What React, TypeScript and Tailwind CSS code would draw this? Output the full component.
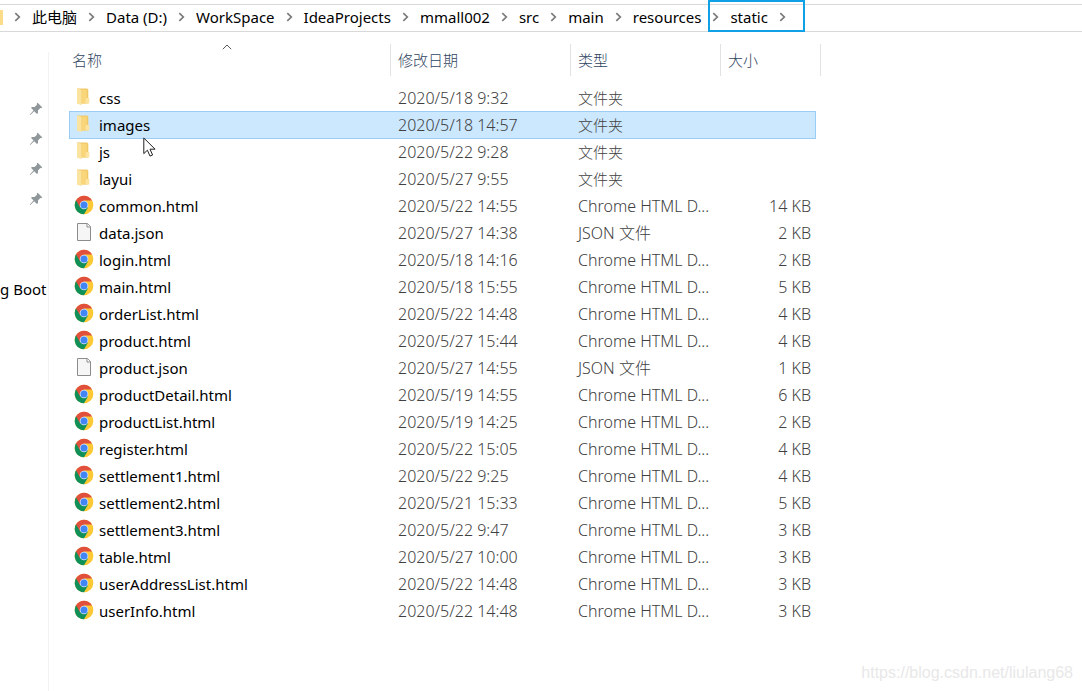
import { useState } from "react";

type FileKind = "folder" | "html" | "json";

type FileItem = {
    name : string,
    date : string,
    kind : FileKind,
    size? : string,
}

const path = ["此电脑", "Data (D:)", "WorkSpace", "IdeaProjects", "mmall002", "src", "main", "resources"];

const files : FileItem[] = [
    { name: "css", date: "2020/5/18 9:32", kind: "folder" },
    { name: "images", date: "2020/5/18 14:57", kind: "folder" },
    { name: "js", date: "2020/5/22 9:28", kind: "folder" },
    { name: "layui", date: "2020/5/27 9:55", kind: "folder" },
    { name: "common.html", date: "2020/5/22 14:55", kind: "html", size: "14 KB" },
    { name: "data.json", date: "2020/5/27 14:38", kind: "json", size: "2 KB" },
    { name: "login.html", date: "2020/5/18 14:16", kind: "html", size: "2 KB" },
    { name: "main.html", date: "2020/5/18 15:55", kind: "html", size: "5 KB" },
    { name: "orderList.html", date: "2020/5/22 14:48", kind: "html", size: "4 KB" },
    { name: "product.html", date: "2020/5/27 15:44", kind: "html", size: "4 KB" },
    { name: "product.json", date: "2020/5/27 14:55", kind: "json", size: "1 KB" },
    { name: "productDetail.html", date: "2020/5/19 14:55", kind: "html", size: "6 KB" },
    { name: "productList.html", date: "2020/5/19 14:25", kind: "html", size: "2 KB" },
    { name: "register.html", date: "2020/5/22 15:05", kind: "html", size: "4 KB" },
    { name: "settlement1.html", date: "2020/5/22 9:25", kind: "html", size: "4 KB" },
    { name: "settlement2.html", date: "2020/5/21 15:33", kind: "html", size: "5 KB" },
    { name: "settlement3.html", date: "2020/5/22 9:47", kind: "html", size: "3 KB" },
    { name: "table.html", date: "2020/5/27 10:00", kind: "html", size: "3 KB" },
    { name: "userAddressList.html", date: "2020/5/22 14:48", kind: "html", size: "3 KB" },
    { name: "userInfo.html", date: "2020/5/22 14:48", kind: "html", size: "3 KB" },
];

const kindLabels : Record<FileKind, string> = {
    folder: "文件夹",
    html: "Chrome HTML D...",
    json: "JSON 文件",
};

function Chevron() {
    return (
        <svg viewBox="0 0 29 10" className="h-[10px] w-[29px] shrink-0" fill="none" stroke="#7a7a7a" strokeWidth="1.7">
            <path d="M12.3 1.2 16.3 5l-4 3.8" />
        </svg>
    )
}

function FolderIcon() {
    return (
        <svg viewBox="0 0 20 20" className="mb-0.5 size-5">
            <path d="M3 1.5h10l1.3 1v14H3z" fill="#f0c868" />
            <path d="M3 1.5l4.5 1.3v15.4L3 16.6z" fill="#fbe3a0" />
            <path d="M7.5 2.8h5.2v8.4l-1 1v4.3H7.5z" fill="#fad67a" />
            <path d="M12.4 11h2.9v5.5h-3.8v-4.6z" fill="#fde3a0" />
        </svg>
    )
}

function PageIcon() {
    return (
        <svg viewBox="0 0 20 20" className="mb-0.5 size-5">
            <path d="M3.5 1.5h10l3 3v14h-13z" fill="#f6f6f6" stroke="#8c8c8c" />
            <path d="M13 1.5v3.5h3.5" fill="#fff" stroke="#8c8c8c" />
        </svg>
    )
}

function ChromeIcon() {
    return (
        <svg viewBox="0 0 20 20" className="mb-0.5 size-5">
            <circle cx="10" cy="10" r="9.3" fill="#fcc934" />
            <path d="M10 10 1.95 5.35a9.3 9.3 0 0 0 8.05 13.95l4-6.9z" fill="#0f9058" />
            <path d="M1.95 5.35a9.3 9.3 0 0 1 16.1 0.15H10L6 12.3z" fill="#e0503c" />
            <circle cx="10" cy="10" r="4.3" fill="#dfe9f8" />
            <circle cx="10" cy="10" r="3.5" fill="#4285f4" />
        </svg>
    )
}

function PinIcon() {
    return (
        <svg viewBox="0 0 14 14" className="size-[14px]" fill="#8f979b">
            <path d="M8.6 0.8 13.2 5.2 12.2 6.2 11.3 6 9 8.4 9 11 8 12 5.2 9.2 1.2 12.9 0.8 12.5 4.5 8.5 2 5.8 3 4.9 5.6 5 8 2.8 7.7 1.7z" />
        </svg>
    )
}

function FileIcon({ kind } : { kind : FileKind }) {
    if (kind === "folder") return <FolderIcon />
    if (kind === "html") return <ChromeIcon />
    return <PageIcon />
}

function AddressBar() {
    return (
        <nav className="mt-1 flex h-7 items-center border-y border-[#d9d9d9] pb-0.5" aria-label="path">
            <span className="h-[15px] w-[3px] bg-[#fbdc8a]" />
            <ol className="flex items-center whitespace-nowrap">
                {path.map((name) => (
                    <li key={name} className="flex items-center">
                        <Chevron />
                        <a href="#" className="text-black">{name}</a>
                    </li>
                ))}
                <li className="relative flex items-center">
                    <Chevron />
                    <a href="#" className="text-black">static</a>
                    <Chevron />
                    <span className="pointer-events-none absolute -top-[7px] -right-2 -bottom-[5px] left-[7px] border-2 border-[#0fa0e6]" />
                </li>
            </ol>
        </nav>
    )
}

function Sidebar() {
    return (
        <aside className="mt-5 w-[49px] shrink-0 overflow-hidden border-r border-[#f3f3f3] pt-[50px]">
            <ul className="flex flex-col gap-4 pl-[29px]">
                {[1, 2, 3, 4].map((n) => (
                    <li key={n}><PinIcon /></li>
                ))}
            </ul>
            <p className="mt-[73px] whitespace-nowrap text-black">g Boot</p>
        </aside>
    )
}

function App() {
    const [selected, setSelected] = useState("images")

    return (
        <div className="relative flex min-h-screen flex-col overflow-hidden bg-white font-['Noto_Sans','Noto_Sans_CJK_SC',sans-serif] text-[15px] leading-5">
            <AddressBar />

            <div className="flex grow">
                <Sidebar />

                <main className="ml-5 pt-3">
                    <table className="w-[752px] table-fixed border-separate border-spacing-0 text-left font-light">
                        <colgroup>
                            <col className="w-[322px]" />
                            <col className="w-[180px]" />
                            <col className="w-[150px]" />
                            <col className="w-[95px]" />
                            <col className="w-[5px]" />
                        </colgroup>
                        <thead className="text-[#2f4460]">
                            <tr className="h-8">
                                <th className="relative border-r border-[#e2e2e2] p-0 pl-[3px] font-light">
                                    <button type="button">名称</button>
                                    <svg viewBox="0 0 10 6" className="absolute top-0 left-[153px] h-[6px] w-[10px]" fill="none" stroke="#5a5a5a">
                                        <path d="M0.8 5.2 5 1l4.2 4.2" />
                                    </svg>
                                </th>
                                <th className="border-r border-[#e2e2e2] p-0 pl-[7px] font-light">
                                    <button type="button">修改日期</button>
                                </th>
                                <th className="border-r border-[#e2e2e2] p-0 pl-[7px] font-light">
                                    <button type="button">类型</button>
                                </th>
                                <th colSpan={2} className="border-r border-[#e2e2e2] p-0 pl-[7px] font-light">
                                    <button type="button">大小</button>
                                </th>
                            </tr>
                        </thead>
                        <tbody className="text-[#404040]">
                            <tr className="h-2"><td colSpan={5} className="p-0" /></tr>
                            {files.map((file) => {
                                const active = file.name === selected
                                const cell = active ? "border-t border-[#99cdf5] bg-[#cce8ff] p-0 shadow-[0_1px_0_#99cdf5]" : "p-0"

                                return (
                                    <tr key={file.name} className="h-[27px]" onClick={() => setSelected(file.name)}>
                                        <td className={active ? cell + " border-l pl-1" : cell + " pl-[5px]"}>
                                            <div className="flex items-center gap-[5px] font-normal text-black">
                                                <FileIcon kind={file.kind} />
                                                {file.name}
                                            </div>
                                        </td>
                                        <td className={cell + " pl-[7px] text-base leading-5"}>{file.date}</td>
                                        <td className={cell + " pl-[7px] whitespace-nowrap"}>
                                            <span className={file.kind === "folder" ? "" : "text-base leading-5"}>{kindLabels[file.kind]}</span>
                                        </td>
                                        <td className={(active ? cell + " border-r pr-1" : cell + " pr-[5px]") + " text-right text-base leading-5"}>{file.size}</td>
                                        <td className="p-0" />
                                    </tr>
                                )
                            })}
                        </tbody>
                    </table>
                </main>
            </div>

            <svg viewBox="0 0 13 20" className="pointer-events-none absolute top-[137px] left-[143px] h-5 w-[13px]" fill="#fff" stroke="#222" strokeWidth="1">
                <path d="M0.8 1v15.6l3.6-3.4 2.6 5.9 2.6-1.1-2.6-5.8h5.1z" />
            </svg>

            <p className="absolute right-[9px] bottom-2 font-['Liberation_Sans',sans-serif] text-base leading-5 text-[#e8e8e8]">
                https://blog.csdn.net/liulang68
            </p>
        </div>
    )
}

export default App
